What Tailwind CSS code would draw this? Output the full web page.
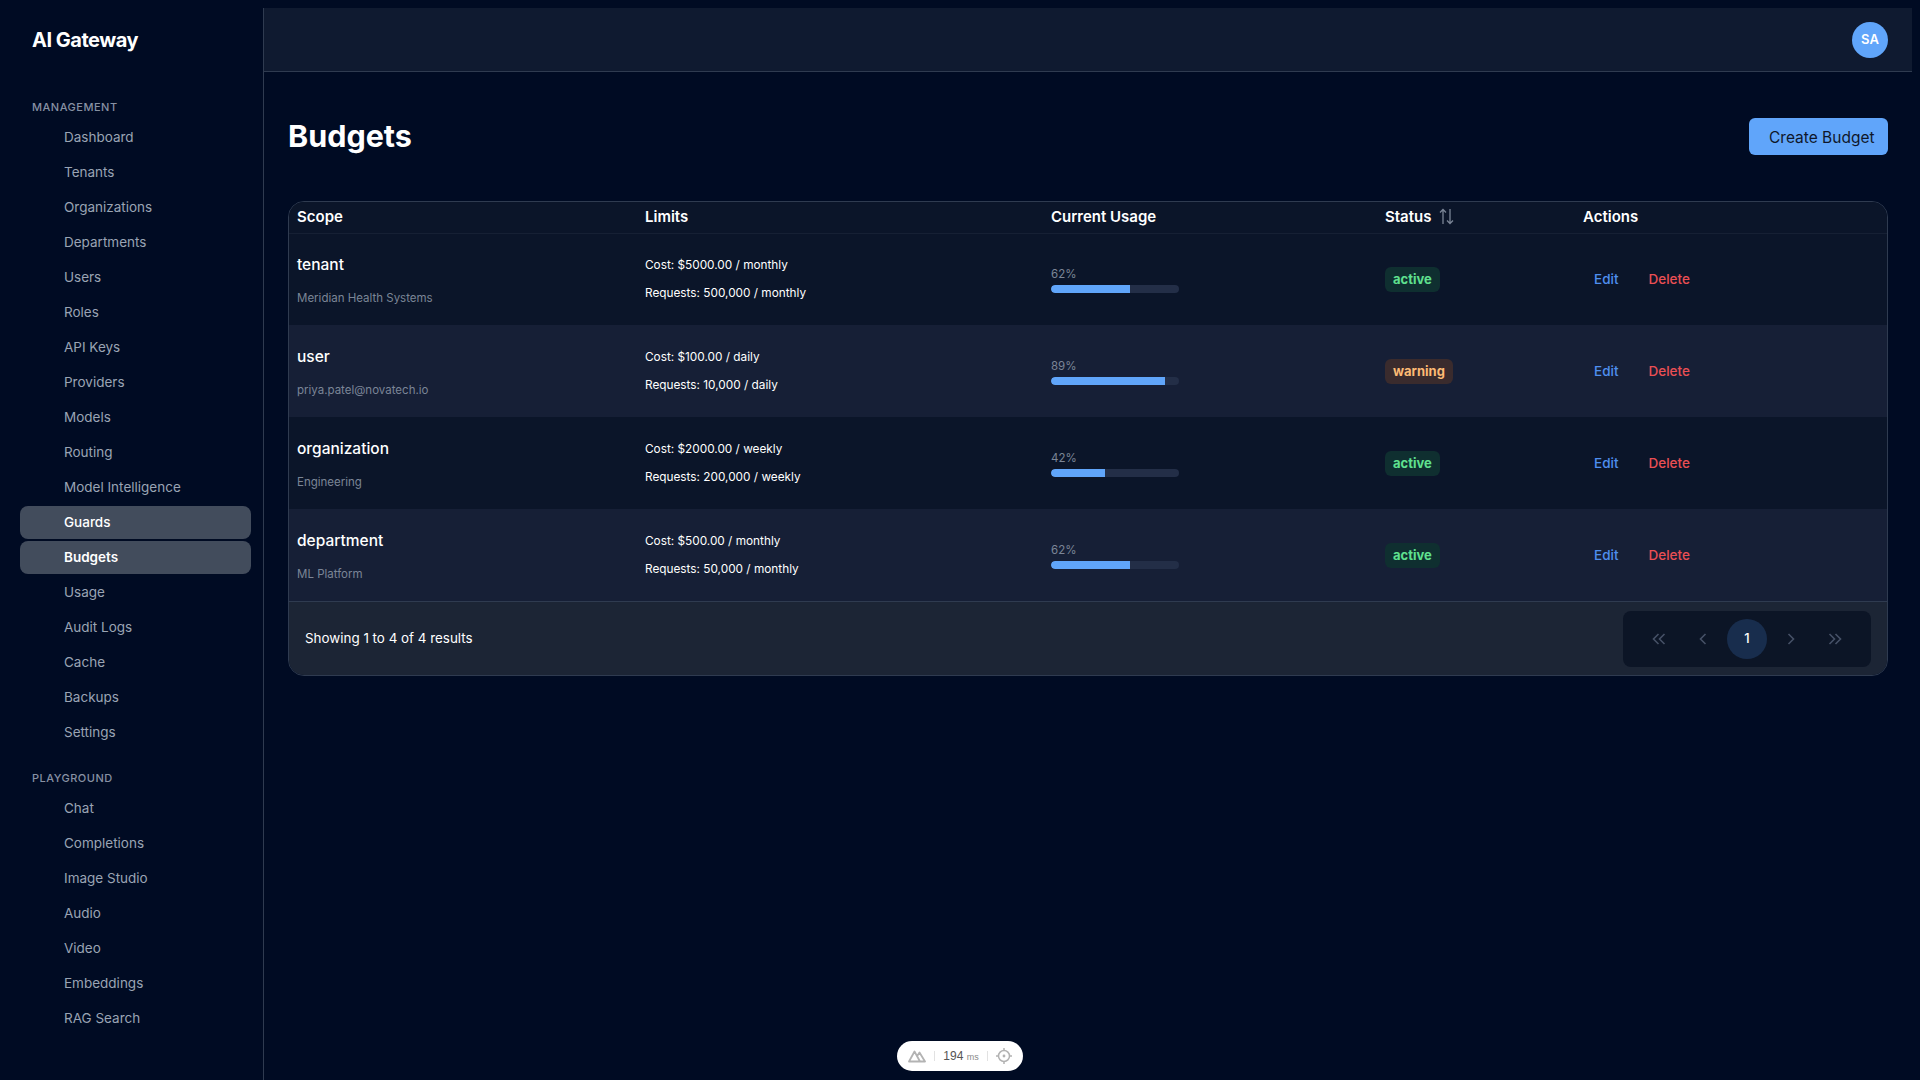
<!DOCTYPE html>
<html lang="en">
<head>
  <meta charset="UTF-8" />
  <title>AI Gateway - Budgets</title>
  <script src="https://cdn.jsdelivr.net/npm/@tailwindcss/browser@4"></script>
</head>
<body class="bg-[#000b23] h-screen overflow-hidden font-['Inter',sans-serif] text-white relative">
  <div class="flex h-full pt-2 pr-2">

    <!-- Sidebar -->
    <aside class="w-[264px] shrink-0 border-r border-[#2f3b50]">
      <div class="h-[64px] flex items-center pl-8 text-[20px] font-bold tracking-[-0.5px]">AI Gateway</div>
      <div class="mt-[27px] mb-[6px] pl-8 h-4 leading-4 text-[11px] font-medium tracking-[0.5px] text-[#8791a3]">MANAGEMENT</div>
      <nav class="flex flex-col gap-[2px] ml-5 w-[231px] text-[13.5px] text-[#9aa4b4]">
        <a class="h-[33px] pl-11 flex items-center">Dashboard</a>
        <a class="h-[33px] pl-11 flex items-center">Tenants</a>
        <a class="h-[33px] pl-11 flex items-center">Organizations</a>
        <a class="h-[33px] pl-11 flex items-center">Departments</a>
        <a class="h-[33px] pl-11 flex items-center">Users</a>
        <a class="h-[33px] pl-11 flex items-center">Roles</a>
        <a class="h-[33px] pl-11 flex items-center">API Keys</a>
        <a class="h-[33px] pl-11 flex items-center">Providers</a>
        <a class="h-[33px] pl-11 flex items-center">Models</a>
        <a class="h-[33px] pl-11 flex items-center">Routing</a>
        <a class="h-[33px] pl-11 flex items-center">Model Intelligence</a>
        <a class="h-[33px] pl-11 flex items-center rounded-lg bg-[#424c5c] text-white font-medium">Guards</a>
        <a class="h-[33px] pl-11 flex items-center rounded-lg bg-[#424c5c] text-white font-semibold">Budgets</a>
        <a class="h-[33px] pl-11 flex items-center">Usage</a>
        <a class="h-[33px] pl-11 flex items-center">Audit Logs</a>
        <a class="h-[33px] pl-11 flex items-center">Cache</a>
        <a class="h-[33px] pl-11 flex items-center">Backups</a>
        <a class="h-[33px] pl-11 flex items-center">Settings</a>
      </nav>
      <div class="mt-[21px] mb-[6px] pl-8 h-4 leading-4 text-[11px] font-medium tracking-[0.5px] text-[#8791a3]">PLAYGROUND</div>
      <nav class="flex flex-col gap-[2px] ml-5 w-[231px] text-[13.5px] text-[#9aa4b4]">
        <a class="h-[33px] pl-11 flex items-center">Chat</a>
        <a class="h-[33px] pl-11 flex items-center">Completions</a>
        <a class="h-[33px] pl-11 flex items-center">Image Studio</a>
        <a class="h-[33px] pl-11 flex items-center">Audio</a>
        <a class="h-[33px] pl-11 flex items-center">Video</a>
        <a class="h-[33px] pl-11 flex items-center">Embeddings</a>
        <a class="h-[33px] pl-11 flex items-center">RAG Search</a>
      </nav>
    </aside>

    <!-- Main -->
    <main class="flex-1 min-w-0">
      <header class="h-[64px] bg-[#0f1a30] border-b border-[#2f3b50] flex items-center justify-end pr-6">
        <div class="w-9 h-9 rounded-full bg-[#60a5fa] flex items-center justify-center text-[13px] font-semibold">SA</div>
      </header>

      <div class="px-6 pt-[46px]">
        <div class="flex items-center justify-between mb-[46px]">
          <h1 class="text-[30.5px] leading-9 font-bold -mt-[2px]">Budgets</h1>
          <button class="w-[139px] h-[37px] pl-5 pt-[2px] text-left rounded-md bg-[#60a5fa] text-[#0f172a] text-[15.5px]">Create Budget</button>
        </div>

        <!-- Table card -->
        <div class="border border-[#2f3b50] rounded-2xl overflow-hidden">
          <table class="w-full table-fixed border-collapse">
            <thead class="bg-[#0b1529]">
              <tr class="h-[31px] border-b border-[#162034] text-[15px] font-semibold text-left">
                <th class="w-[348px] pl-2 font-semibold">Scope</th>
                <th class="w-[406px] pl-2 font-semibold">Limits</th>
                <th class="w-[335px] pl-2 font-semibold">Current Usage</th>
                <th class="w-[197px] pl-[7px] font-semibold">
                  <span class="flex items-center gap-2">Status
                    <svg class="w-[15px] h-[17px] -mt-[2px]" viewBox="0 0 15 17" fill="none" stroke="#7b8596" stroke-width="1.3"><path d="M4 16V1.5M1 4.5 4 1.5 7 4.5M11 1v14.5M8 12.5l3 3 3-3"/></svg>
                  </span>
                </th>
                <th class="pl-2 font-semibold">Actions</th>
              </tr>
            </thead>
            <tbody>
              <tr class="h-[92px] bg-[#0b1529]">
                <td class="pl-2 pt-[4px]">
                  <div class="text-[15.5px] leading-5 font-medium">tenant</div>
                  <div class="mt-[13px] text-[11.5px] leading-5 text-[#7b8596]">Meridian Health Systems</div>
                </td>
                <td class="pl-2 text-[11.8px] leading-[28px]">
                  <div>Cost: $5000.00 / monthly</div>
                  <div>Requests: 500,000 / monthly</div>
                </td>
                <td class="pl-2">
                  <div class="text-[11.5px] leading-4 text-[#7b8596]">62%</div>
                  <div class="mt-[3px] w-[128px] h-2 rounded bg-[#232e47] overflow-hidden"><div class="h-full bg-[#60a5fa] rounded-l" style="width:62%"></div></div>
                </td>
                <td class="pl-[7px]"><span class="inline-flex items-center h-[25px] px-2 rounded-md bg-[#0f2f30] text-[#5fe08f] text-[13px] font-bold">active</span></td>
                <td class="pl-5 text-[13.5px] font-medium">
                  <span class="text-[#4f8fef] -ml-[1px]">Edit</span><span class="ml-[30px] text-[#ea4f54]">Delete</span>
                </td>
              </tr>
              <tr class="h-[92px] bg-[#161f36]">
                <td class="pl-2 pt-[4px]">
                  <div class="text-[15.5px] leading-5 font-medium">user</div>
                  <div class="mt-[13px] text-[11.5px] leading-5 text-[#7b8596]">priya.patel@novatech.io</div>
                </td>
                <td class="pl-2 text-[11.8px] leading-[28px]">
                  <div>Cost: $100.00 / daily</div>
                  <div>Requests: 10,000 / daily</div>
                </td>
                <td class="pl-2">
                  <div class="text-[11.5px] leading-4 text-[#7b8596]">89%</div>
                  <div class="mt-[3px] w-[128px] h-2 rounded bg-[#232e47] overflow-hidden"><div class="h-full bg-[#60a5fa] rounded-l" style="width:89%"></div></div>
                </td>
                <td class="pl-[7px]"><span class="inline-flex items-center h-[25px] px-2 rounded-md bg-[#3a2b2d] text-[#fdba74] text-[13px] font-bold">warning</span></td>
                <td class="pl-5 text-[13.5px] font-medium">
                  <span class="text-[#4f8fef] -ml-[1px]">Edit</span><span class="ml-[30px] text-[#ea4f54]">Delete</span>
                </td>
              </tr>
              <tr class="h-[92px] bg-[#0b1529]">
                <td class="pl-2 pt-[4px]">
                  <div class="text-[15.5px] leading-5 font-medium">organization</div>
                  <div class="mt-[13px] text-[11.5px] leading-5 text-[#7b8596]">Engineering</div>
                </td>
                <td class="pl-2 text-[11.8px] leading-[28px]">
                  <div>Cost: $2000.00 / weekly</div>
                  <div>Requests: 200,000 / weekly</div>
                </td>
                <td class="pl-2">
                  <div class="text-[11.5px] leading-4 text-[#7b8596]">42%</div>
                  <div class="mt-[3px] w-[128px] h-2 rounded bg-[#232e47] overflow-hidden"><div class="h-full bg-[#60a5fa] rounded-l" style="width:42%"></div></div>
                </td>
                <td class="pl-[7px]"><span class="inline-flex items-center h-[25px] px-2 rounded-md bg-[#0f2f30] text-[#5fe08f] text-[13px] font-bold">active</span></td>
                <td class="pl-5 text-[13.5px] font-medium">
                  <span class="text-[#4f8fef] -ml-[1px]">Edit</span><span class="ml-[30px] text-[#ea4f54]">Delete</span>
                </td>
              </tr>
              <tr class="h-[92px] bg-[#161f36]">
                <td class="pl-2 pt-[4px]">
                  <div class="text-[15.5px] leading-5 font-medium">department</div>
                  <div class="mt-[13px] text-[11.5px] leading-5 text-[#7b8596]">ML Platform</div>
                </td>
                <td class="pl-2 text-[11.8px] leading-[28px]">
                  <div>Cost: $500.00 / monthly</div>
                  <div>Requests: 50,000 / monthly</div>
                </td>
                <td class="pl-2">
                  <div class="text-[11.5px] leading-4 text-[#7b8596]">62%</div>
                  <div class="mt-[3px] w-[128px] h-2 rounded bg-[#232e47] overflow-hidden"><div class="h-full bg-[#60a5fa] rounded-l" style="width:62%"></div></div>
                </td>
                <td class="pl-[7px]"><span class="inline-flex items-center h-[25px] px-2 rounded-md bg-[#0f2f30] text-[#5fe08f] text-[13px] font-bold">active</span></td>
                <td class="pl-5 text-[13.5px] font-medium">
                  <span class="text-[#4f8fef] -ml-[1px]">Edit</span><span class="ml-[30px] text-[#ea4f54]">Delete</span>
                </td>
              </tr>
            </tbody>
          </table>

          <!-- Footer / pagination -->
          <div class="h-[74px] bg-[#1c2535] border-t border-[#2f3b50] flex items-center justify-between pl-4 pr-4">
            <span class="text-[13.4px]">Showing 1 to 4 of 4 results</span>
            <div class="w-[248px] h-14 rounded-lg bg-[#0c1526] flex items-center justify-center text-[#465166]">
              <span class="w-11 flex justify-center">
                <svg class="w-4 h-4" viewBox="0 0 16 16" fill="none" stroke="currentColor" stroke-width="1.6"><path d="M7.5 3 2.5 8l5 5M13.5 3l-5 5 5 5"/></svg>
              </span>
              <span class="w-11 flex justify-center">
                <svg class="w-4 h-4" viewBox="0 0 16 16" fill="none" stroke="currentColor" stroke-width="1.6"><path d="M10.5 3 5.5 8l5 5"/></svg>
              </span>
              <span class="w-10 h-10 mx-[2px] rounded-full bg-[#182d4d] flex items-center justify-center text-white text-[13px] font-medium">1</span>
              <span class="w-11 flex justify-center">
                <svg class="w-4 h-4" viewBox="0 0 16 16" fill="none" stroke="currentColor" stroke-width="1.6"><path d="M5.5 3 10.5 8l-5 5"/></svg>
              </span>
              <span class="w-11 flex justify-center">
                <svg class="w-4 h-4" viewBox="0 0 16 16" fill="none" stroke="currentColor" stroke-width="1.6"><path d="M2.5 3 7.5 8l-5 5M8.5 3l5 5-5 5"/></svg>
              </span>
            </div>
          </div>
        </div>
      </div>
    </main>
  </div>

  <!-- Dev toolbar pill -->
  <div class="absolute left-[897px] top-[1041px] w-[126px] h-[30px] rounded-full bg-white flex items-center justify-center text-[#555]">
    <svg class="w-[18px] h-[14px]" viewBox="0 0 18 14" fill="none" stroke="#b3b3b3" stroke-width="1.8" stroke-linejoin="round"><path d="M1 12.5 6.5 2.5l5.5 10zM9.5 6.5 11.5 3.5l5.5 9h-5"/></svg>
    <span class="w-px h-[10px] bg-[#e2e2e2] ml-2"></span>
    <span class="mx-2 text-[12px] font-['Liberation_Sans',sans-serif]">194 <span class="text-[9px] text-[#8a8a8a]">ms</span></span>
    <span class="w-px h-[10px] bg-[#e2e2e2] mr-2"></span>
    <svg class="w-4 h-4" viewBox="0 0 16 16" fill="none" stroke="#b3b3b3" stroke-width="1.5"><circle cx="8" cy="8" r="5.5"/><circle cx="8" cy="8" r="1.4" fill="#b3b3b3" stroke="none"/><path d="M8 0v2.5M8 13.5V16M0 8h2.5M13.5 8H16"/></svg>
  </div>
</body>
</html>
